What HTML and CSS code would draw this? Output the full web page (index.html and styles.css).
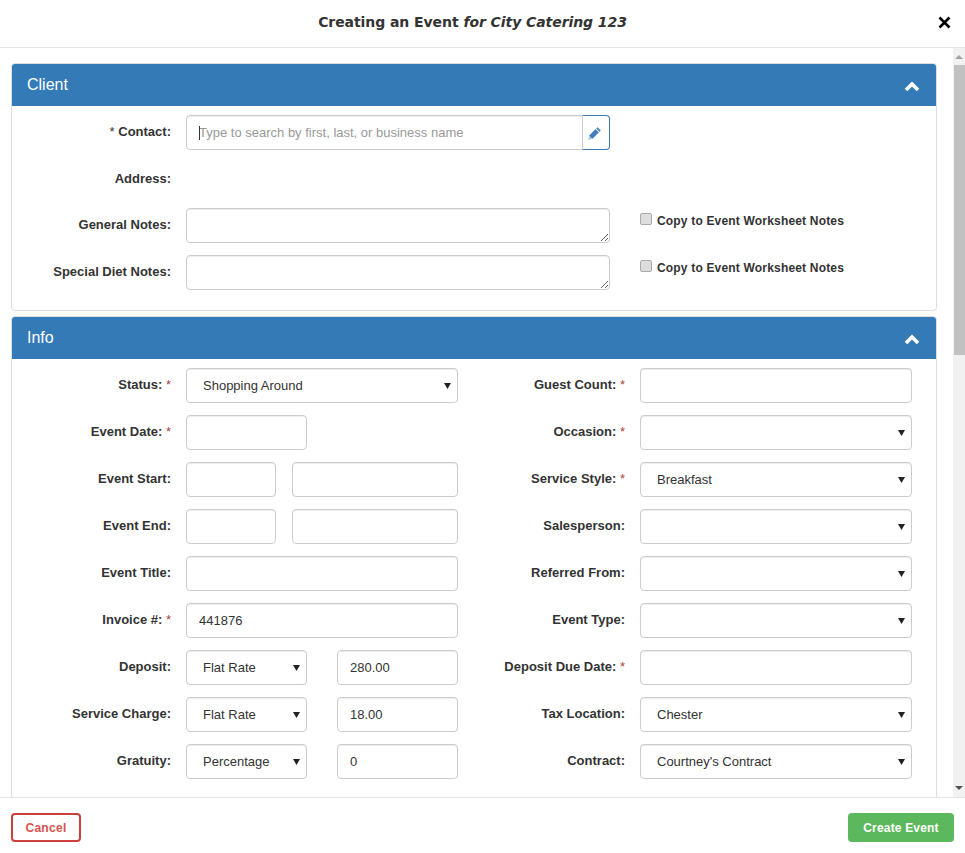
FILE: index.html
```html
<!DOCTYPE html>
<html lang="en">
<head>
    <meta charset="UTF-8">
    <meta name="viewport" content="width=device-width, initial-scale=1.0">
    <title>Creating an Event</title>
    <link rel="stylesheet" href="styles.css">
</head>
<body>
    <div class="modal-header">
        <h1 class="modal-title">Creating an Event <em>for City Catering 123</em></h1>
        <button type="button" class="close-button" aria-label="Close">
            <svg width="13" height="13" viewBox="0 0 13 13"><path d="M1.5 1.5l10 10M11.5 1.5l-10 10" stroke="#000" stroke-width="2.6" fill="none"/></svg>
        </button>
    </div>

    <div class="modal-main">
        <div class="modal-body">
            <!-- Client -->
            <section class="panel">
                <div class="panel-heading">
                    <h2>Client</h2>
                    <svg class="chevron" width="16" height="11" viewBox="0 0 16 11"><path d="M2 9l6-6 6 6" stroke="#fff" stroke-width="3.6" fill="none"/></svg>
                </div>
                <div class="panel-body">
                    <div class="client-row">
                        <label class="field-label"><span class="star">*</span> Contact:</label>
                        <div class="input-group">
                            <input type="text" class="search-input" placeholder="Type to search by first, last, or business name">
                            <span class="caret"></span>
                            <button type="button" class="edit-button" aria-label="Edit">
                                <svg width="14" height="14" viewBox="0 0 14 14"><path d="M9.6 1.2l3.2 3.2-1.3 1.3-3.2-3.2zM7.5 3.1l3.3 3.3-6.6 6.6-3.2-3.2z" fill="#3f7fc0"/><path d="M1 10.4l2.6 2.6-3.3.8z" fill="#9db9d6"/></svg>
                            </button>
                        </div>
                    </div>
                    <div class="client-row address-row">
                        <label class="field-label">Address:</label>
                    </div>
                    <div class="client-row">
                        <label class="field-label">General Notes:</label>
                        <textarea class="form-control"></textarea>
                        <label class="copy-label"><input type="checkbox"> Copy to Event Worksheet Notes</label>
                    </div>
                    <div class="client-row">
                        <label class="field-label">Special Diet Notes:</label>
                        <textarea class="form-control"></textarea>
                        <label class="copy-label"><input type="checkbox"> Copy to Event Worksheet Notes</label>
                    </div>
                </div>
            </section>

            <!-- Info -->
            <section class="panel info-panel">
                <div class="panel-heading">
                    <h2>Info</h2>
                    <svg class="chevron" width="16" height="11" viewBox="0 0 16 11"><path d="M2 9l6-6 6 6" stroke="#fff" stroke-width="3.6" fill="none"/></svg>
                </div>
                <div class="panel-body">
                    <div class="info-row">
                        <label class="field-label">Status: <span class="req">*</span></label>
                        <select class="form-control"><option>Shopping Around</option></select>
                        <label class="field-label">Guest Count: <span class="req">*</span></label>
                        <input type="text" class="form-control">
                    </div>
                    <div class="info-row">
                        <label class="field-label">Event Date: <span class="req">*</span></label>
                        <div class="pair-amount"><input type="text" class="form-control"></div>
                        <label class="field-label">Occasion: <span class="req">*</span></label>
                        <select class="form-control"><option></option></select>
                    </div>
                    <div class="info-row">
                        <label class="field-label">Event Start:</label>
                        <div class="pair-time"><input type="text" class="form-control"><input type="text" class="form-control"></div>
                        <label class="field-label">Service Style: <span class="req">*</span></label>
                        <select class="form-control"><option>Breakfast</option></select>
                    </div>
                    <div class="info-row">
                        <label class="field-label">Event End:</label>
                        <div class="pair-time"><input type="text" class="form-control"><input type="text" class="form-control"></div>
                        <label class="field-label">Salesperson:</label>
                        <select class="form-control"><option></option></select>
                    </div>
                    <div class="info-row">
                        <label class="field-label">Event Title:</label>
                        <input type="text" class="form-control">
                        <label class="field-label">Referred From:</label>
                        <select class="form-control"><option></option></select>
                    </div>
                    <div class="info-row">
                        <label class="field-label">Invoice #: <span class="req">*</span></label>
                        <input type="text" class="form-control" value="441876">
                        <label class="field-label">Event Type:</label>
                        <select class="form-control"><option></option></select>
                    </div>
                    <div class="info-row">
                        <label class="field-label">Deposit:</label>
                        <div class="pair-amount">
                            <select class="form-control"><option>Flat Rate</option></select>
                            <input type="text" class="form-control" value="280.00">
                        </div>
                        <label class="field-label">Deposit Due Date: <span class="req">*</span></label>
                        <input type="text" class="form-control">
                    </div>
                    <div class="info-row">
                        <label class="field-label">Service Charge:</label>
                        <div class="pair-amount">
                            <select class="form-control"><option>Flat Rate</option></select>
                            <input type="text" class="form-control" value="18.00">
                        </div>
                        <label class="field-label">Tax Location:</label>
                        <select class="form-control"><option>Chester</option></select>
                    </div>
                    <div class="info-row">
                        <label class="field-label">Gratuity:</label>
                        <div class="pair-amount">
                            <select class="form-control"><option>Percentage</option></select>
                            <input type="text" class="form-control" value="0">
                        </div>
                        <label class="field-label">Contract:</label>
                        <select class="form-control"><option>Courtney's Contract</option></select>
                    </div>
                </div>
            </section>
        </div>

        <div class="scrollbar">
            <svg class="scroll-arrow" width="8" height="4" viewBox="0 0 8 4"><path d="M0 4l4-4 4 4z" fill="#a3a3a3"/></svg>
            <div class="scroll-thumb"></div>
            <svg class="scroll-arrow scroll-arrow-down" width="8" height="4" viewBox="0 0 8 4"><path d="M0 0l4 4 4-4z" fill="#505050"/></svg>
        </div>
    </div>

    <div class="modal-footer">
        <button type="button" class="cancel-button">Cancel</button>
        <button type="button" class="create-button">Create Event</button>
    </div>
</body>
</html>
```

FILE: styles.css
```css
* {
    margin: 0;
    padding: 0;
    box-sizing: border-box;
}

html, body {
    height: 100%;
    overflow: hidden;
}

body {
    font-family: 'Liberation Sans', Arial, sans-serif;
    font-size: 13px;
    color: #333;
    background: white;
    display: flex;
    flex-direction: column;
}

.modal-header {
    height: 48px;
    flex: none;
    border-bottom: 1px solid #e5e5e5;
    display: flex;
    justify-content: center;
    padding: 14px 20px 0 0;
}

.modal-title {
    font-family: 'DejaVu Sans', Verdana, sans-serif;
    font-size: 14px;
    line-height: 17px;
    font-weight: bold;
    letter-spacing: -0.07px;
    color: #333;
}

.close-button {
    position: absolute;
    top: 16px;
    left: 938px;
    width: 13px;
    height: 13px;
    border: none;
    background: none;
    display: flex;
}

.modal-main {
    flex: 1;
    min-height: 0;
    display: flex;
}

.modal-body {
    flex: 1;
    min-width: 0;
    overflow: hidden;
    padding: 15px 16px 0 11px;
}

.scrollbar {
    width: 12px;
    flex: none;
    background: #f1f1f1;
    display: flex;
    flex-direction: column;
    align-items: center;
    padding-top: 7px;
}

.scroll-thumb {
    width: 11px;
    height: 290px;
    margin: 6px 0 0 1px;
    background: #c1c1c1;
}

.scroll-arrow-down {
    margin-top: auto;
    margin-bottom: 7px;
}

.panel {
    border: 1px solid #ddd;
    border-radius: 4px;
    margin-bottom: 5px;
    background: white;
}

.panel-heading {
    height: 42px;
    background: #337ab7;
    color: white;
    display: flex;
    align-items: center;
    justify-content: space-between;
    padding: 0 16px 0 15px;
    border-radius: 3px 3px 0 0;
}

.panel-heading h2 {
    font-size: 16px;
    font-weight: normal;
}

.chevron {
    margin-top: 2px;
}

.panel-body {
    padding: 9px 0 8px;
}

.client-row,
.info-row {
    display: grid;
    column-gap: 15px;
    align-items: center;
    min-height: 35px;
    margin-bottom: 12px;
}

.client-row {
    grid-template-columns: 159px 424px 1fr;
}

.address-row {
    min-height: 34px;
}

.info-row {
    grid-template-columns: 159px 272px 152px 272px;
}

.field-label {
    font-size: 13px;
    font-weight: bold;
    color: #333;
    text-align: right;
    padding-bottom: 2px;
}

.star {
    font-weight: normal;
}

.req {
    font-weight: normal;
    color: #a94442;
}

.form-control {
    display: block;
    width: 100%;
    height: 35px;
    padding: 0 12px;
    font-family: inherit;
    font-size: 13px;
    color: #333;
    background-color: white;
    border: 1px solid #ccc;
    border-radius: 4px;
    box-shadow: inset 0 1px 1px rgba(0,0,0,0.075);
}

select.form-control {
    padding: 0 16px;
    appearance: none;
    -webkit-appearance: none;
    background-image: url("data:image/svg+xml,%3Csvg xmlns='http://www.w3.org/2000/svg' width='7' height='6'%3E%3Cpath d='M0 0h7L3.5 6z' fill='%23222'/%3E%3C/svg%3E");
    background-repeat: no-repeat;
    background-position: right 6px center;
}

.input-group {
    display: flex;
    position: relative;
}

.search-input {
    flex: 1;
    min-width: 0;
    height: 35px;
    padding: 0 12px;
    font-family: inherit;
    font-size: 13px;
    border: 1px solid #ccc;
    border-radius: 4px 0 0 4px;
    box-shadow: inset 0 1px 1px rgba(0,0,0,0.075);
    outline: none;
}

.search-input::placeholder {
    color: #999;
}

.caret {
    position: absolute;
    left: 13px;
    top: 11px;
    width: 1px;
    height: 14px;
    background: #333;
}

.edit-button {
    width: 28px;
    height: 35px;
    flex: none;
    margin-left: -1px;
    padding-right: 3px;
    background: white;
    border: 1px solid #337ab7;
    border-left-color: #ccc;
    border-radius: 0 4px 4px 0;
    display: flex;
    align-items: center;
    justify-content: center;
}

.copy-label {
    display: flex;
    align-items: center;
    gap: 5px;
    padding-left: 15px;
    padding-bottom: 10px;
    font-size: 12px;
    font-weight: bold;
    letter-spacing: 0.18px;
}

.copy-label input {
    appearance: none;
    -webkit-appearance: none;
    width: 12px;
    height: 12px;
    margin: -2px 0 2px;
    background: #ddd;
    border: 1px solid #aaa;
    border-radius: 2px;
}

.pair-time {
    display: grid;
    grid-template-columns: 90px 166px;
    column-gap: 16px;
}

.pair-amount {
    display: grid;
    grid-template-columns: 121px 121px;
    column-gap: 30px;
}

.modal-footer {
    height: 56px;
    flex: none;
    border-top: 1px solid #e5e5e5;
    display: flex;
    justify-content: space-between;
    align-items: flex-start;
    padding: 15px 11px 0;
}

.cancel-button,
.create-button {
    height: 29px;
    font-family: inherit;
    font-size: 12px;
    font-weight: bold;
    border-radius: 4px;
}

.cancel-button {
    width: 70px;
    background: white;
    color: #d9534f;
    border: 2px solid #c9403c;
    letter-spacing: 0.3px;
}

.create-button {
    width: 106px;
    background: #5cb85c;
    color: white;
    border: none;
    letter-spacing: 0.18px;
}
```
